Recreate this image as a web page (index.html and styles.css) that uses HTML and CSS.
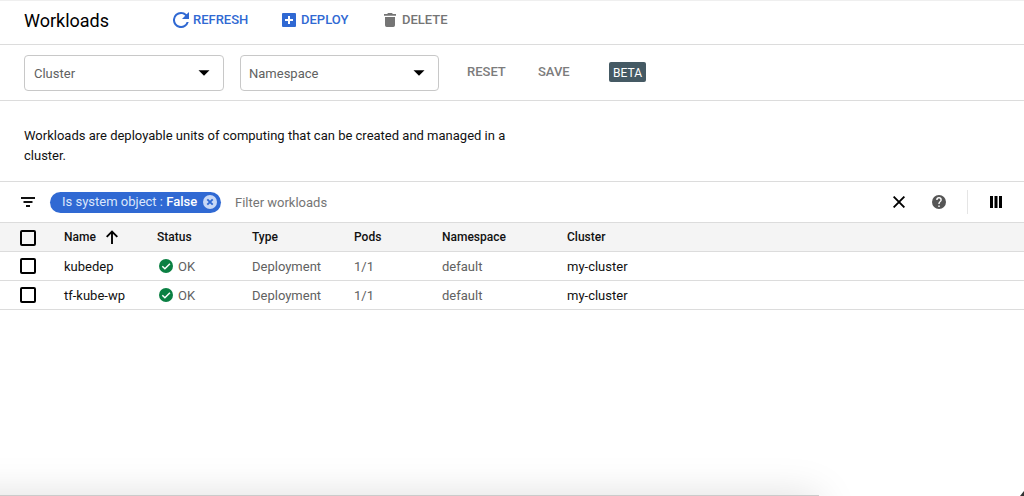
FILE: index.html
```html
<!DOCTYPE html>
<html lang="en">
<head>
<meta charset="utf-8">
<title>Workloads</title>
<link rel="stylesheet" href="styles.css">
</head>
<body>
<div class="page">
  <header class="topbar">
    <h1 class="title">Workloads</h1>
    <button class="action refresh">
      <svg width="16" height="16" viewBox="4 4 16 16"><path fill="currentColor" d="M17.65 6.35A7.96 7.96 0 0 0 12 4a8 8 0 1 0 7.73 10h-2.08A6 6 0 1 1 12 6c1.66 0 3.14.69 4.22 1.78L13 11h7V4z"/></svg>
      <span>REFRESH</span>
    </button>
    <button class="action deploy">
      <svg width="14" height="14" viewBox="0 0 14 14"><rect width="14" height="14" rx="1" fill="currentColor"/><path d="M7 3v8M3 7h8" stroke="#fff" stroke-width="2"/></svg>
      <span>DEPLOY</span>
    </button>
    <button class="action delete">
      <svg width="12" height="14" viewBox="0 0 12 14"><path fill="currentColor" d="M0 1h3.2L4 0h4l.8 1H12v1.700H0zM1 4h10v8.300a1.700 1.700 0 0 1-1.700 1.700H2.700A1.700 1.700 0 0 1 1 12.300z"/></svg>
      <span>DELETE</span>
    </button>
  </header>

  <div class="scope">
    <div class="select"><span>Cluster</span><svg width="12" height="6" viewBox="0 0 12 6"><path d="M.5.300h11L6 5.800z"/></svg></div>
    <div class="select namespace"><span>Namespace</span><svg width="12" height="6" viewBox="0 0 12 6"><path d="M.5.300h11L6 5.800z"/></svg></div>
    <button class="text-button reset">RESET</button>
    <button class="text-button save">SAVE</button>
    <span class="beta">BETA</span>
  </div>

  <section class="intro"><p>Workloads are deployable units of computing that can be created and managed in a cluster.</p></section>

  <div class="filterbar">
    <svg class="filter-icon" width="14" height="10" viewBox="0 0 14 10"><path fill="#111" d="M0 0h14v2H0zM2.500 4h9v2h-9zM5 8h4v2H5z"/></svg>
    <div class="chip">
      <span class="chip-text">Is system object : <b>False</b></span>
      <svg width="14" height="14" viewBox="0 0 14 14"><circle cx="7" cy="7" r="7" fill="#c8d8f6"/><path d="M4.300 4.300l5.400 5.400M9.700 4.300L4.300 9.700" stroke="#3069d3" stroke-width="1.900"/></svg>
    </div>
    <span class="placeholder">Filter workloads</span>
    <div class="tools">
      <svg class="close" width="12" height="12" viewBox="0 0 12 12"><path d="M.6.600l10.800 10.800M11.400.600L.6 11.400" stroke="#000" stroke-width="1.900"/></svg>
      <svg class="help" width="14" height="14" viewBox="2 2 20 20"><path fill="#555" d="M12 2a10 10 0 1 0 0 20 10 10 0 0 0 0-20zm1 17h-2v-2h2v2zm2.070-7.750l-.9.920C13.450 12.900 13 13.500 13 15h-2v-.5c0-1.100.45-2.100 1.170-2.830l1.240-1.260c.37-.36.590-.86.590-1.410a2 2 0 0 0-4 0H8a4 4 0 0 1 8 0c0 .88-.36 1.680-.93 2.250z"/></svg>
      <div class="columns"><svg width="12" height="12" viewBox="0 0 12 12"><path d="M0 0h3v12H0zM4.500 0h3v12h-3zM9 0h3v12H9z"/></svg></div>
    </div>
  </div>

  <div class="table">
    <div class="row head">
      <i class="check"></i>
      <span class="name">Name<svg width="12" height="14" viewBox="0 0 12 14"><path d="M6 14V1.600M.7 6.900L6 1.500l5.300 5.400" fill="none" stroke="#000" stroke-width="1.900"/></svg></span>
      <span>Status</span><span>Type</span><span>Pods</span><span>Namespace</span><span>Cluster</span>
    </div>
    <div class="row item">
      <i class="check"></i>
      <span class="strong">kubedep</span>
      <span class="status"><svg width="14" height="14" viewBox="0 0 14 14"><circle cx="7" cy="7" r="7" fill="#0b8043"/><path d="M3.300 7.200l2.600 2.600 5-5" fill="none" stroke="#fff" stroke-width="1.500"/></svg>OK</span>
      <span>Deployment</span><span>1/1</span><span>default</span><span class="strong">my-cluster</span>
    </div>
    <div class="row item">
      <i class="check"></i>
      <span class="strong">tf-kube-wp</span>
      <span class="status"><svg width="14" height="14" viewBox="0 0 14 14"><circle cx="7" cy="7" r="7" fill="#0b8043"/><path d="M3.300 7.200l2.600 2.600 5-5" fill="none" stroke="#fff" stroke-width="1.500"/></svg>OK</span>
      <span>Deployment</span><span>1/1</span><span>default</span><span class="strong">my-cluster</span>
    </div>
  </div>
  <div class="panel-shadow"></div>
  <div class="corner"></div>
</div>
</body>
</html>
```
FILE: styles.css
```css
* { box-sizing: border-box; }
body { margin: 0; background: #fff; font: 13px/20px Roboto, sans-serif; color: #111; }
svg { display: block; flex: none; }
button { border: 0; background: none; padding: 0; font: inherit; }
.page { position: relative; height: 496px; overflow: hidden; }

.topbar { display: flex; align-items: center; height: 45px; padding: 0 0 5px 24px; border-bottom: 1px solid #dcdcdc; box-shadow: inset 0 1px 0 #efefef; }
.title { margin: 2px 0 0; width: 149px; font-size: 18px; font-weight: 400; color: #000; }
.action { display: flex; align-items: center; font-weight: 500; color: #3069d3; }
.refresh { width: 109px; gap: 4px; }
.deploy { width: 102px; gap: 5px; }
.delete { gap: 6px; color: #757575; }

.scope { display: flex; align-items: center; height: 56px; padding: 0 24px; border-bottom: 1px solid #dcdcdc; }
.select { display: flex; align-items: center; justify-content: space-between; width: 200px; height: 36px; padding: 0 13px 0 9px; border: 1px solid #c8c8c8; border-radius: 4px; color: #616161; }
.select span { padding-top: 2px; }
.namespace { width: 199px; margin-left: 16px; padding-left: 8px; }
.text-button { font-weight: 500; color: #7c7c7c; }
.reset { width: 71px; margin: 0 0 2px 28px; text-align: left; }
.save { width: 71px; margin-bottom: 2px; text-align: left; }
.beta { height: 20px; width: 37px; margin-bottom: 2px; border-radius: 2px; background: #455a64; color: #fff; font-size: 12px; line-height: 22px; text-align: center; }

.intro { height: 81px; padding: 25px 24px; border-bottom: 1px solid #dcdcdc; }
.intro p { width: 500px; margin: 0; }

.filterbar { display: flex; align-items: center; height: 41px; padding-left: 21px; border-bottom: 1px solid #dcdcdc; }
.chip { display: flex; align-items: center; justify-content: space-between; width: 171px; height: 21px; margin-left: 15px; padding: 0 4px 0 12px; border-radius: 11px; background: #3069d3; color: #dce7fb; }
.chip b { font-weight: 500; color: #fff; }
.placeholder { margin-left: 14px; padding-top: 1px; color: #757575; }
.tools { display: flex; align-items: center; margin-left: auto; }
.help { margin-left: 27px; }
.columns { display: flex; align-items: center; height: 24px; margin-left: 21px; padding: 0 22px; border-left: 1px solid #e5e5e5; }

.row { display: grid; grid-template-columns: 44px 93px 95px 102px 88px 125px 1fr; align-items: center; height: 29px; padding-left: 20px; border-bottom: 1px solid #dcdcdc; color: #616161; }
.head { background: #f4f4f4; color: #111; font-size: 12px; font-weight: 500; }
.item { line-height: 22px; }
.item > span { padding-top: 2px; }
.strong { color: #111; }
.name { display: flex; align-items: center; gap: 10px; }
.status { display: flex; align-items: center; gap: 5px; padding-left: 2px; }
.status svg { margin-top: -2px; }
.check { width: 16px; height: 16px; border: 2px solid #000; border-radius: 2px; }
.head .check { margin-top: 2px; }

.panel-shadow { position: absolute; left: -60px; top: 495px; width: 879px; height: 60px; background: #cbcbcb; box-shadow: 0 0 40px rgba(0, 0, 0, .13); }
.corner { position: absolute; right: 0; bottom: 0; width: 4px; height: 5px; background: #333; clip-path: polygon(100% 0, 100% 100%, 0 100%); }
```
